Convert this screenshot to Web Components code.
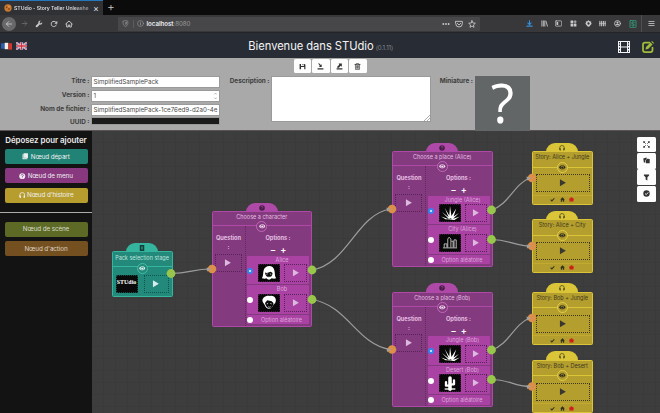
<!DOCTYPE html>
<html lang="fr">
<head>
<meta charset="utf-8">
<title>STUdio - Story Teller Unleashed</title>
<style>
html,body{margin:0;height:100%;overflow:hidden;background:#3c3c3c}
body{font-family:Inter,"Liberation Sans",sans-serif;font-size:7px}
</style>
</head>
<body>
<studio-app></studio-app>
<script>
const define=(name,css,html,init)=>customElements.define(name,class extends HTMLElement{
  constructor(){super();this.attachShadow({mode:'open'});}
  connectedCallback(){
    if(this.shadowRoot.childNodes.length)return;
    const t=document.createElement('template');
    t.innerHTML='<style>*{box-sizing:border-box}'+css+'</style>'+(typeof html==='function'?html(this):html);
    this.shadowRoot.append(t.content.cloneNode(true));
    if(init)init(this);
  }
});
const L='fill="none" stroke="currentColor" stroke-linecap="round" stroke-linejoin="round"';
const ICONS={
  back:`<path ${L} stroke-width="2.600" d="M20 12H4M11 5l-7 7 7 7"/>`,
  forward:`<path ${L} stroke-width="2.600" d="M4 12h16M13 5l7 7-7 7"/>`,
  wrench:`<path fill="currentColor" d="M21.5 6.5 18 10l-3.500-.6L14 6l3.500-3.500C14 1 10 3 9.800 7c0 1 .1 1.800.4 2.600L2.500 17.500c-2 2.300 1.500 6 4 4L14.300 13.700C18.500 15 23 11.500 21.500 6.500z"/>`,
  reload:`<path ${L} stroke-width="3" d="M19 15a8 8 0 1 1-1-8"/><path fill="currentColor" d="M22 2v9h-9z"/>`,
  house:`<path ${L} stroke-width="2.800" d="M2 12 12 3l10 9M5 11v10h5v-6h4v6h5V11"/>`,
  shield:`<path ${L} stroke-width="2.200" d="M4 4 12 2l8 2v8c0 5-4 9-8 10-4-1-8-5-8-10z"/><path fill="currentColor" d="M12 6l4 1v5c0 3-2 4-4 5z"/>`,
  info:`<circle cx="12" cy="12" r="10" ${L} stroke-width="2"/><path ${L} stroke-width="2.400" d="M12 11v6M12 7v.5"/>`,
  dots:`<g fill="currentColor"><circle cx="4" cy="12" r="2.800"/><circle cx="12" cy="12" r="2.800"/><circle cx="20" cy="12" r="2.800"/></g>`,
  pocket:`<path ${L} stroke-width="2.700" d="M2 4h20v7a10 10 0 0 1-20 0zM7 10l5 5 5-5"/>`,
  star:`<path ${L} stroke-width="2.600" d="m12 2 3 7 7 .7-5.500 5L18 22l-6-4-6 4 1.500-7.300L2 9.700 9 9z"/>`,
  download:`<path ${L} stroke-width="3.500" d="M12 2v13M6 10l6 6 6-6M3 21h18"/>`,
  library:`<path ${L} stroke-width="3" d="M3 3v18M8 3v18M13 3v18M17 4l5 17"/>`,
  sidebar:`<rect x="1" y="3" width="22" height="18" rx="3" ${L} stroke-width="2.500"/><path fill="currentColor" d="M5 7h6v10H5z"/>`,
  grid:`<path fill="currentColor" d="M2 2h9v9H2zM2 13h9v9H2zM13 13h9v9h-9zM16 1h3v4h4v3h-4v4h-3V8h-4V5h4z"/>`,
  gear:`<path fill="currentColor" fill-rule="evenodd" d="m12 1 4 3 5 1v5l2 3-4 4-3 4-4 2-4-2-3-4-4-4 2-3V5l5-1zm0 7a4 4 0 1 0 0 8 4 4 0 0 0 0-8z"/>`,
  bars4:`<path ${L} stroke-width="3.500" d="M3 4v16M9 4v16M15 4v16M21 4v16"/><path ${L} stroke-width="2" d="M1 12h22"/>`,
  account:`<circle cx="12" cy="12" r="10" ${L} stroke-width="3"/><circle cx="12" cy="9" r="3.500" fill="currentColor"/><path fill="currentColor" d="M5 14h14c-1 5-13 5-14 0z"/>`,
  sbox:`<rect x="3" y="1" width="18" height="22" rx="2" ${L} stroke-width="2"/><path ${L} stroke-width="2.500" d="M16 7c-2-2-8-2-8 2s8 2 8 6-6 4-8 1"/>`,
  menu:`<path ${L} stroke-width="2.800" d="M3 5h18M3 12h18M3 19h18"/>`,
  film:`<path fill="currentColor" fill-rule="evenodd" d="M0 0h24v24H0zM2 2v3h2V2zm0 5v3h2V7zm0 6v3h2v-3zm0 6v3h2v-3zM20 2v3h2V2zm0 5v3h2V7zm0 6v3h2v-3zm0 6v3h2v-3zM6 2v9h12V2zm0 11v9h12v-9z"/>`,
  edit:`<path ${L} stroke-width="3.500" d="M15 3H6a4 4 0 0 0-4 4v11a4 4 0 0 0 4 4h11a4 4 0 0 0 4-4v-5"/><path fill="currentColor" d="m8 12 9-9 4 4-9 9-5 1zM18.500 1.500 20 0l4 4-1.500 1.500z"/>`,
  save:`<path fill="currentColor" fill-rule="evenodd" d="M2 3h5v7h10V3h2l3 3v15h-4v-7H7v7H2zM12 3h3v5h-3z"/>`,
  import:`<path fill="currentColor" d="M2 18h20v4H2zM4 2l3-1 6 6 3-3v10H6l4-4z"/>`,
  export:`<path fill="currentColor" d="M2 18h20v4H2zM9 2h11v11l-4-4-6 7H4v-3l7-7z"/>`,
  trash:`<path ${L} stroke-width="2.200" d="M3 5h18M8 5V2h8v3M5 5v17h14V5M9 9v9M12 9v9M15 9v9"/>`,
  book:`<path fill="currentColor" d="M6 1h16v18h-3v4H2V5h4z"/><path stroke="var(--hole,#218376)" stroke-width="1.200" d="M6 5v14h13" fill="none"/>`,
  tag:`<path fill="currentColor" d="M3 0h18v24H3z"/><path fill="#1f7a70" d="M8 6h8v12H8z"/>`,
  question:`<circle cx="12" cy="12" r="11" fill="currentColor"/><path d="M8 9c0-5 8-5 8-.5 0 3-4 3-4 6M12 17v2" fill="none" stroke="var(--hole,#87387f)" stroke-width="3"/>`,
  phones:`<path ${L} stroke-width="2.800" d="M3 14v-3a9 9 0 0 1 18 0v3"/><path fill="currentColor" d="M1 13h6v9H4c-3-2-4-6-3-9zM17 13h6c1 3 0 7-3 9h-3z"/>`,
  eye:`<path fill="currentColor" fill-rule="evenodd" d="M0 12C5 2 19 2 24 12 19 22 5 22 0 12zm12-6a6 6 0 1 0 0 12 6 6 0 0 0 0-12z"/><circle cx="12" cy="13" r="4.200" fill="currentColor"/>`,
  play:`<path fill="currentColor" d="M3 1 22 12 3 23z"/>`,
  check:`<path fill="none" stroke="currentColor" stroke-width="5" d="m3 13 6 6L21 6"/>`,
  home:`<path fill="currentColor" d="M12 1 1 12h3v11h6v-7h4v7h6V12h3z"/>`,
  bug:`<path fill="currentColor" d="M7 6a5 5 0 0 1 10 0l5-1-1 5 3 3-3 3 1 6H2l1-6-3-3 3-3-1-5z"/>`,
  expand:`<path fill="none" stroke="currentColor" stroke-width="3" d="m3 3 6 6M21 3l-6 6M3 21l6-6M21 21l-6-6"/><path fill="currentColor" d="M1 1h7L1 8zM23 1v7l-7-7zM1 23v-7l7 7zM23 23h-7l7-7z"/>`,
  copy:`<path fill="currentColor" d="M1 5 12 2l1 5-5 4v8H3z"/><path fill="currentColor" d="m10 10 5-4 8 1v14H10z"/>`,
  filter:`<path fill="currentColor" d="M3 2h18v3l-6 6v11l-6-3v-8L3 5z"/>`,
  okay:`<circle cx="12" cy="12" r="11" fill="currentColor"/><path fill="none" stroke="#fff" stroke-width="3" d="m7 12 4 4 7-8"/>`,
  fox:`<circle cx="12" cy="12" r="11" fill="#c9792f"/><circle cx="8" cy="10" r="2.500" fill="#7b3d16"/><circle cx="15" cy="8" r="2" fill="#efb465"/><circle cx="15" cy="15" r="3" fill="#8d4c1d"/>`
};
define('ui-icon',':host{display:inline-flex;flex:none;width:var(--s,8px);height:var(--s,8px)}svg{width:100%;height:100%;display:block}',
  el=>`<svg viewBox="0 0 24 24">${ICONS[el.getAttribute('name')]}</svg>`);

define('browser-chrome',`
:host{display:block;color:#c9c9cb}
.tabs{height:15px;background:#0b0b0c;display:flex}
.tab{width:103px;background:#303135;border-top:1.500px solid #2676bd;display:flex;align-items:center;padding:0 4px;gap:2px;color:#dedee0}
.tab b{font-size:5.200px;font-weight:600;width:79px;white-space:nowrap;letter-spacing:-.08px;color:transparent;background:linear-gradient(90deg,#e4e4e6 75%,#77777b 100%);-webkit-background-clip:text;background-clip:text}
.x{font-size:9px;line-height:9px;margin-left:-1px}.plus{font-size:12px;line-height:14px;margin-left:4px;font-weight:300}
.nav{height:18px;background:#38383b;display:flex;align-items:center;padding:0 5px 0 2px;border-bottom:1px solid #222327}
.bk{width:14px;height:14px;border-radius:50%;background:#68686b;display:grid;place-items:center;margin-right:-2px}
.left{display:flex;gap:7px;align-items:center}
.url{height:14px;margin-left:45px;width:362px;background:#474749;border-radius:1px;display:flex;align-items:center;padding:0 4px;gap:3.500px;font-size:6.200px;color:#9a9a9c}
.url i{width:1px;height:8px;background:#5c5c5f}.url b{font-weight:600;color:#ececee}.url span{flex:1;letter-spacing:-.05px;margin-left:-1px}
.acts{display:flex;gap:4.800px;color:#c9c9cb}
.right{display:flex;margin-left:auto;align-items:center;gap:7.700px}
.right i{width:1px;height:17px;background:#505053;margin:0 -2px 0 -3px}
`,`
<div class="tabs"><div class="tab"><ui-icon name="fox"></ui-icon><b>STUdio - Story Teller Unleashe</b><span class="x">×</span></div><span class="plus">+</span></div>
<div class="nav"><div class="left"><span class="bk"><ui-icon name="back"></ui-icon></span><ui-icon name="forward" style="color:#707073;--s:7px"></ui-icon><ui-icon name="wrench"></ui-icon><ui-icon name="reload"></ui-icon><ui-icon name="house"></ui-icon></div>
<div class="url"><ui-icon name="shield" style="--s:7px"></ui-icon><i></i><ui-icon name="info" style="--s:7px"></ui-icon><span><b>localhost</b>:8080</span><div class="acts"><ui-icon name="dots"></ui-icon><ui-icon name="pocket"></ui-icon><ui-icon name="star"></ui-icon></div></div>
<div class="right" style="--s:7px"><ui-icon name="download" style="color:#3590dc"></ui-icon><ui-icon name="library"></ui-icon><ui-icon name="sidebar"></ui-icon><ui-icon name="grid"></ui-icon><ui-icon name="gear"></ui-icon><ui-icon name="bars4"></ui-icon><ui-icon name="account"></ui-icon><ui-icon name="sbox" style="color:#36b890;--s:8px"></ui-icon><i></i><ui-icon name="menu"></ui-icon></div></div>`);

define('app-header',`
:host{display:grid;grid-template-columns:1fr auto 1fr;align-items:center;height:25px;background:#282c34;color:#f4f4f5;padding:0 6px 0 1px}
.flags{display:flex;gap:4px}.flags svg{width:11px;height:8px;margin-top:-1px}
h1{margin:0;font-size:11.200px;font-weight:400;letter-spacing:-.05px;white-space:nowrap;margin-left:-13.500px;line-height:25px;padding-top:1px}
small{font-size:6.200px;color:#84878c;letter-spacing:-.1px;margin-left:-1px}
.r{display:flex;justify-content:flex-end;gap:12px;align-items:center}
`,`
<div class="flags"><svg viewBox="0 0 12 8"><path fill="#285eaa" d="M0 1h4v6H0z"/><path fill="#eee" d="M4 0.500h4v7H4z"/><path fill="#d3352c" d="M8 1h4v7H8z"/></svg>
<svg viewBox="0 0 12 8"><path fill="#2c4582" d="M0 0h12v8H0z"/><path stroke="#eee" stroke-width="1.800" d="m0 0 12 8M12 0 0 8"/><path stroke="#c53b43" stroke-width=".7" d="m0 0 12 8M12 0 0 8"/><path stroke="#eee" stroke-width="2.700" d="M6 0v8M0 4h12"/><path stroke="#d23142" stroke-width="1.500" d="M6 0v8M0 4h12"/></svg></div>
<h1>Bienvenue dans STUdio <small>(0.1.11)</small></h1>
<div class="r"><ui-icon name="film" style="--s:12px"></ui-icon><ui-icon name="edit" style="--s:12px;color:#a3bb3a"></ui-icon></div>`);

define('icon-button',':host{display:grid;place-items:center;background:#fdfdfd;color:#323232;border-radius:1.500px;--s:7px}','<slot></slot>');
define('form-field',`:host{display:flex;font-weight:700;color:#3d3d3d;font-size:6.400px;white-space:nowrap;--b:#fff}
label{flex:none;width:var(--lw);text-align:right;padding-right:1.500px;padding-top:1px;line-height:8px}
.box{width:var(--w);height:var(--h,12px);background:var(--b);border:.500px solid #9a9a9a;font-weight:400;font-size:6.200px;padding:0 1.500px;display:flex;align-items:center;overflow:hidden;color:#4a4a4a}`,
 el=>`<label>${el.getAttribute('label')}</label><div class="box"><slot></slot></div>`);
define('pack-form',`
:host{display:block;height:73px;background:#a9a9a9;border-bottom:1px solid #5b5356}
.bar{display:flex;gap:1px;justify-content:center;height:15px;padding:1px 0 0 0}
.bar icon-button{width:17.500px;height:14px}
.fields{display:flex;align-items:flex-start;padding-top:2.500px}
.col{display:grid;grid-template-rows:12px 12px 12px 8px;gap:2px;--lw:91px;--w:129px}
.col form-field:last-child{margin-top:-.500px}
.spin{margin-left:auto;margin-right:1px;width:3px;height:8px}
.thumb{width:55px;height:55px;background:#626666;color:#fff;font:500 54px/53px "Open Sans",sans-serif;text-align:center}
.m{width:44px;text-align:right;font-weight:700;color:#3d3d3d;font-size:6.400px;line-height:8px;padding:1px 2px 0 0;white-space:nowrap}
.grip{margin:auto -1px 0 auto;width:6px;height:6px}
`,`
<div class="bar"><icon-button><ui-icon name="save"></ui-icon></icon-button><icon-button><ui-icon name="import"></ui-icon></icon-button><icon-button><ui-icon name="export"></ui-icon></icon-button><icon-button><ui-icon name="trash"></ui-icon></icon-button></div>
<div class="fields"><div class="col"><form-field label="Titre :">SimplifiedSamplePack</form-field><form-field label="Version :">1<svg class="spin" viewBox="0 0 4 10"><path d="m.5 3 1.500-2 1.500 2M.5 7 2 9l1.500-2" fill="none" stroke="#888" stroke-width=".7"/></svg></form-field><form-field label="Nom de fichier :">SimplifiedSamplePack-1ce76ed9-d2a0-4e</form-field><form-field label="UUID :" style="--h:8px;--b:#1b1b1b"></form-field></div>
<form-field label="Description :" style="--lw:51px;--w:160px;--h:46px"><svg class="grip" viewBox="0 0 6 6"><path d="m0 6 6-6M3 6l3-3" stroke="#888" stroke-width=".7"/></svg></form-field>
<div class="m">Miniature :</div><div class="thumb">?</div></div>`);

define('palette-item',':host{display:flex;align-items:center;justify-content:center;gap:2px;height:15px;border-radius:2px;color:#f0eff0;font-size:6.300px;letter-spacing:-.1px;white-space:nowrap;--s:6.500px}','<slot></slot>');
define('node-palette',`:host{display:block;width:92px;background:#131313}
h2{margin:0;text-align:center;color:#ececec;font-size:7.900px;font-weight:600;line-height:18px;white-space:nowrap;letter-spacing:-.02px}
section{display:grid;padding:0 4.500px 9px;gap:4.400px}section+section{border-top:1px solid #aaa;padding-top:9px}`,`
<h2>Déposez pour ajouter</h2>
<section><palette-item style="background:#218376"><ui-icon name="book"></ui-icon>Nœud départ</palette-item><palette-item style="background:#87387f"><ui-icon name="question"></ui-icon>Nœud de menu</palette-item><palette-item style="background:#b79d2e"><ui-icon name="phones"></ui-icon>Nœud d'histoire</palette-item></section>
<section><palette-item style="background:#5d6a26;color:#d8dccb">Nœud de scène</palette-item><palette-item style="background:#745020;color:#ddd2c3">Nœud d'action</palette-item></section>`);

const nodeCss=`
:host{display:block;position:absolute;width:var(--w);height:var(--h);font-size:5.500px;color:var(--t)}
.tab{position:absolute;top:-8.500px;left:calc(50% - 16px);width:32px;height:10px;background:var(--e);border-radius:9px 9px 0 0;display:grid;place-items:center;--s:6px;color:var(--ic)}
.body{position:relative;height:100%;border:1px solid var(--e);border-radius:1.500px;background:var(--c)}
.title{height:14px;line-height:11px;text-align:center;white-space:nowrap;border-bottom:1px solid var(--e)}
.eye{position:absolute;top:9px;left:calc(50% - 5.500px);width:11px;height:11px;border-radius:50%;border:1px solid var(--r);background:var(--c);display:grid;place-items:center;--s:6.500px;color:var(--ey)}`;
const top_=(icon,title)=>`<div class="tab"><ui-icon name="${icon}"></ui-icon></div><div class="body"><div class="title">${title}</div><div class="eye"><ui-icon name="eye"></ui-icon></div>`;
define('play-box',':host{display:grid;place-items:center;border:1px dotted var(--d,#5a2058);height:18px;color:var(--p,#dcb9df);--s:7.500px}','<ui-icon name="play"></ui-icon>');

define('start-node',nodeCss+`
:host{--w:61px;--h:46px;--e:#35b59d;--r:#45bda7;--c:#22897b;--t:#bfe2dc;--ic:#153e3b;--ey:#e0f1ed}
.title{height:14.500px;line-height:12.500px}.eye{top:10.500px}.row{display:flex;justify-content:space-between;padding:8.500px 3px 0}.logo{width:22px;height:18px;background:#0a0a0a;color:#fff;font:700 6px/12px "Liberation Serif",serif;text-align:center;border:1px dotted #0b5048}
play-box{width:25px;--d:#0b554d;--p:#d9edf0}`,
 el=>top_('tag','Pack selection stage')+`<div class="row"><div class="logo">STUdio</div><play-box></play-box></div></div>`);

define('story-node',nodeCss+`
:host{--w:60.500px;--h:53.500px;--e:#dac438;--r:#e3cf4a;--c:#b39e2e;--t:#3f391e;--ic:#4b431b;--ey:#272620}
.title{height:15.500px}.eye{top:9.500px}play-box{margin:6.500px 2px 0 2.500px;--d:#3f3a1c;--p:#383731}
.foot{display:flex;justify-content:center;gap:4.500px;--s:5px;color:#35331f;border-top:1px solid #c2aa30;margin-top:2.500px;padding-top:1.500px}
`,el=>top_('phones',el.getAttribute('title-text'))+`<play-box></play-box><div class="foot"><ui-icon name="check"></ui-icon><ui-icon name="home"></ui-icon><ui-icon name="bug" style="color:#cf1f1b"></ui-icon></div></div>`);

const PICS={
 Alice:'<path fill="#fff" d="M3 15C5 12 4 9 5 6 6 0 16-1 17 6c1 3 0 6 2 9-3 1-4 0-5 0-2 2-4 2-6 0-2 1-3 0-5 0z"/><path d="M6.500 8.500l2 .5L13 7.500l2 1.500c0 6-8 7-8.500-.5z" fill="#0a0a0a"/><path d="m8 10.500 1.500-.5M12 10l1.500.5M9.500 13c1 1 2 1 3 0" stroke="#fff" stroke-width=".8" fill="none"/>',
 Bob:'<path fill="#fff" d="M4 8C2 3 8 0 12 1c6-1 8 4 6 8l-2 2c-2 6-8 6-10 0z"/><path d="m6.500 9 2.500-3 5 1 2 2c0 8-8 8-9.500 0z" fill="#0a0a0a"/><path d="m8.500 10 1.500-.5M12.500 9.500l1.500.5M10 13c1 1 2 1 3 0" stroke="#fff" stroke-width=".8" fill="none"/>',
 Jungle:'<g fill="#fff"><path d="m10 16-8-8 9 7zM10 15 5 3l7 12zM10 15l1-14 2 14zM11 15l7-11-4 12zM12 15l9-6-7 7zM10 16l-9-3 5 3zM13 16l9-3-6 4-8-.500z"/></g>',
 City:'<path fill="none" stroke="#ddd" stroke-width=".9" d="M3 14.500h16M4.500 14v-4h3v4M8.500 14V4.500l1.500-2 2 2V14M12.500 7h2v7M15.500 14V5.500h2.500V14"/>',
 Desert:'<path d="M11 16V3.500" stroke="#fff" stroke-width="4" stroke-linecap="round"/><path d="M11 12H6.500V8M11 10.500h4.500V6" fill="none" stroke="#fff" stroke-width="2.600" stroke-linecap="round" stroke-linejoin="round"/><path fill="#fff" d="M5 15h12v1.500H5z"/>'};
define('menu-option',`
:host{display:block;height:28.500px;background:#a942a2;position:relative;color:#dda9db;text-align:center;font-size:5.500px;border-radius:1px}
:host([random]){height:9.500px}
.n{line-height:9px;white-space:nowrap;padding-left:8px;height:8.500px}
:host([random]) .n{line-height:10px;padding-left:7px}
.row{display:flex;gap:4px;padding-left:11px}.pic{width:22px;height:18px;background:#080808;border:1px dotted #43183f}
.pic svg{width:100%;height:100%;display:block}play-box{width:22.500px}
.radio{position:absolute;left:0;top:12px;width:6px;height:6px;border-radius:50%;background:#fff}
:host([checked]) .radio{background:radial-gradient(#fff 0 12%,#2f86ee 28%)}:host([random]) .radio{top:2px}`,
 el=>`<i class="radio"></i><div class="n"><slot></slot></div>`+(el.hasAttribute('random')?'':`<div class="row"><div class="pic"><svg viewBox="0 0 22 18">${PICS[el.getAttribute('pic')]}</svg></div><play-box></play-box></div>`));
define('menu-node',nodeCss+`
:host{--w:100.500px;--h:115.500px;--e:#af49a7;--r:#c26abb;--c:#843a7e;--t:#e3bfe1;--ic:#431b43;--ey:#f1dcef;--hole:#a741a0}
.title{height:14px}
.cols{display:flex;height:99.500px}
.q{width:33px;border-right:1px dotted #66285f;text-align:center;font-weight:700;padding:7px 2px 0;line-height:9px;font-size:5.700px}
.q play-box{margin-top:2.500px;width:27px}
.o{flex:1;padding:7px 2px 0 1.500px;text-align:center;font-weight:700;font-size:5.700px;line-height:9px}
.pm{font-size:9px;line-height:9px;height:9.500px;color:#fff;margin-top:3px;margin-bottom:1px;font-weight:600;letter-spacing:1.500px;word-spacing:-1px;padding-left:2px}
.list{display:grid;gap:1px;font-weight:400}`,
 el=>top_('question',el.getAttribute('title-text'))+`<div class="cols"><div class="q">Question<br>:<play-box></play-box></div><div class="o">Options :<div class="pm">− +</div><div class="list"><slot></slot><menu-option random>Option aléatoire</menu-option></div></div></div></div>`);

define('link-layer',':host{display:block;position:absolute;inset:0;pointer-events:none}svg{position:absolute;left:0;top:0;overflow:visible}',el=>{
 const links=JSON.parse(el.getAttribute('links')),layer=el.getAttribute('layer');let s='';
 for(const [x,y,X,Y] of links){const k=(X-x)*.45;
  s+=layer==='wires'?`<path d="M${x} ${y}C${x+k} ${y+(Math.abs(Y-y)>20?6*Math.sign(Y-y):0)} ${X-k} ${Y-(Math.abs(Y-y)>20?6*Math.sign(Y-y):0)} ${X-2} ${Y}" fill="none" stroke="#9c9c9c" stroke-width="1.200"/>`
   :`<circle cx="${x}" cy="${y}" r="4.400" fill="#98c64c"/><circle cx="${X}" cy="${Y}" r="4.300" fill="#dc8f4a"/><path d="M${X-5.5} ${Y-1.500}l5 1.500-4.500 2.500z" fill="#a7a098"/>`;}
 return `<svg width="568" height="282" viewBox="92 131 568 282">${s}</svg>`;});
const LINKS=JSON.stringify([[171,273.5,212,269],[312,270,392,209],[312,299.5,392,349.5],[491.5,210,532,178],[491.5,239.5,532,246],[491.5,350,532,318],[491.5,379.5,532,386.5]]);
define('story-canvas',`
:host{display:block;flex:1;position:relative;overflow:hidden;background:repeating-linear-gradient(90deg,#0000 0 11px,#38383880 11px 12px),repeating-linear-gradient(#0000 0 11px,#38383880 11px 12px),#3d3d3d}
.tools{position:absolute;right:4.500px;top:5.500px;display:grid;gap:.800px}.tools icon-button{width:18.500px;height:15.700px}`,
 `<link-layer layer="wires" links='${LINKS}'></link-layer>
<start-node style="left:19.500px;top:120px"></start-node>
<menu-node title-text="Choose a character" style="left:119.500px;top:80px"><menu-option checked pic="Alice">Alice</menu-option><menu-option pic="Bob">Bob</menu-option></menu-node>
<menu-node title-text="Choose a place (Alice)" style="left:300px;top:20px"><menu-option checked pic="Jungle">Jungle (Alice)</menu-option><menu-option pic="City">City (Alice)</menu-option></menu-node>
<menu-node title-text="Choose a place (Bob)" style="left:300px;top:160.500px"><menu-option checked pic="Jungle">Jungle (Bob)</menu-option><menu-option pic="Desert">Desert (Bob)</menu-option></menu-node>
<story-node title-text="Story: Alice + Jungle" style="left:440px;top:20px"></story-node>
<story-node title-text="Story: Alice + City" style="left:440px;top:88px"></story-node>
<story-node title-text="Story: Bob + Jungle" style="left:440px;top:160.500px"></story-node>
<story-node title-text="Story: Bob + Desert" style="left:440px;top:228.500px"></story-node>
<link-layer layer="ports" links='${LINKS}'></link-layer>
<div class="tools"><icon-button><ui-icon name="expand"></ui-icon></icon-button><icon-button><ui-icon name="copy"></ui-icon></icon-button><icon-button><ui-icon name="filter"></ui-icon></icon-button><icon-button><ui-icon name="okay"></ui-icon></icon-button></div>`);
define('studio-app',':host{display:flex;flex-direction:column;height:100vh}main{flex:1;display:flex;min-height:0}',
 '<browser-chrome></browser-chrome><app-header></app-header><pack-form></pack-form><main><node-palette></node-palette><story-canvas></story-canvas></main>');
</script>
</body>
</html>
